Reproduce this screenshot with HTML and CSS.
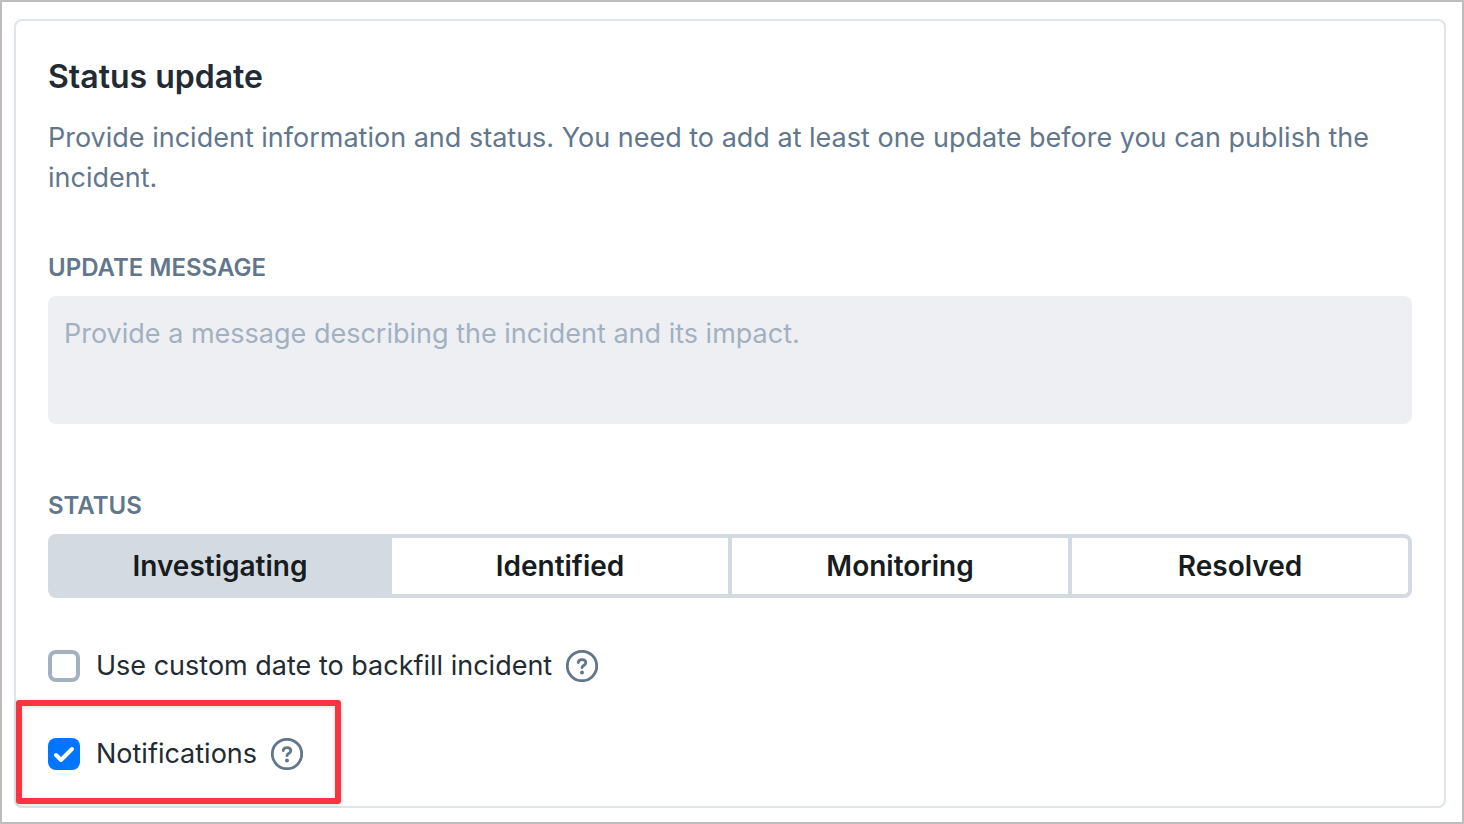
FILE: index.html
```html
<!DOCTYPE html>
<html lang="en">
<head>
<meta charset="utf-8">
<title>Status update</title>
<link rel="stylesheet" href="styles.css">
</head>
<body>
<main class="frame">
  <form class="card">
    <h1 class="title">Status update</h1>
    <p class="intro">Provide incident information and status. You need to add at least one update before you can publish the incident.</p>
    <label class="caption" for="message">UPDATE MESSAGE</label>
    <textarea class="message" id="message" placeholder="Provide a message describing the incident and its impact."></textarea>
    <h2 class="caption" id="status-caption">STATUS</h2>
    <div class="segments" role="group" aria-labelledby="status-caption">
      <button class="segment selected" type="button" aria-pressed="true">Investigating</button>
      <button class="segment" type="button" aria-pressed="false">Identified</button>
      <button class="segment" type="button" aria-pressed="false">Monitoring</button>
      <button class="segment" type="button" aria-pressed="false">Resolved</button>
    </div>
    <div class="option">
      <input class="check" type="checkbox" id="backfill">
      <label class="option-label" for="backfill">Use custom date to backfill incident</label>
      <button class="help" type="button" aria-label="Help with custom date">
        <svg class="help-icon" viewBox="0 0 32 32" aria-hidden="true"><circle cx="16" cy="16" r="14.7"/><path d="M12.200 12.500C12.500 10.500 14 9.600 16 9.600c2.200 0 3.800 1.200 3.800 3.100 0 2.800-3.800 2.800-3.800 5"/><circle class="dot" cx="16" cy="22.400" r="2"/></svg>
      </button>
    </div>
    <div class="option highlighted">
      <input class="check" type="checkbox" id="notifications" checked>
      <label class="option-label" for="notifications">Notifications</label>
      <button class="help" type="button" aria-label="Help with notifications">
        <svg class="help-icon" viewBox="0 0 32 32" aria-hidden="true"><circle cx="16" cy="16" r="14.7"/><path d="M12.200 12.500C12.500 10.500 14 9.600 16 9.600c2.200 0 3.800 1.200 3.800 3.100 0 2.800-3.800 2.800-3.800 5"/><circle class="dot" cx="16" cy="22.400" r="2"/></svg>
      </button>
    </div>
  </form>
</main>
</body>
</html>
```
FILE: styles.css
```css
* { box-sizing: border-box; }
body { margin: 0; background: #fff; font-family: Inter, "Liberation Sans", sans-serif; color: #222b33; }
.frame { min-height: 100vh; padding: 17px 16px 14px 12px; border: 2px solid #bdbdbd; }
.card { padding: 36px 32px 0; border: 2px solid #e0e5eb; border-radius: 8px; }
.title { margin: 0 0 21px; font-size: 32px; line-height: 40px; font-weight: 600; }
.intro { margin: 0 0 54px; font-size: 27px; line-height: 40px; color: #62778c; }
.caption { display: block; margin: 0 0 12px; font-size: 24px; line-height: 32px; font-weight: 600; color: #62778c; }
.message { display: block; width: 100%; height: 128px; margin: 0 0 66px; padding: 18px 16px; border: 0; border-radius: 8px; background: #eeeff3; font: inherit; font-size: 27px; line-height: 40px; resize: none; }
.message::placeholder { color: #a1b1c2; opacity: 1; }
.segments { display: flex; margin-bottom: 48px; border: 4px solid #d4dae2; border-radius: 8px; background: #d4dae2; gap: 4px; }
.segment { flex: 1; padding: 8px; border: 0; background: #fff; color: #161c20; font: inherit; font-size: 28px; line-height: 40px; font-weight: 600; }
.segment:last-child { border-radius: 0 4px 4px 0; }
.selected { background: #d4dae2; }
.option { display: flex; align-items: center; height: 40px; margin-bottom: 48px; }
.check { appearance: none; flex: none; width: 32px; height: 32px; margin: 0 16px 0 0; border: 4px solid #a1b1c2; border-radius: 8px; }
.check:checked { border: 0; background: #0075ff url("data:image/svg+xml,%3Csvg xmlns='http://www.w3.org/2000/svg' viewBox='0 0 32 32'%3E%3Cpath d='M8 17l5 5 11-11' fill='none' stroke='white' stroke-width='4' stroke-linecap='round' stroke-linejoin='round'/%3E%3C/svg%3E"); }
.option-label { font-size: 27px; line-height: 40px; }
.help { display: flex; margin-left: 14px; padding: 0; border: 0; background: none; color: #62778c; }
.help-icon { width: 32px; height: 32px; fill: none; stroke: currentColor; stroke-width: 2.800; stroke-linecap: round; }
.dot { fill: currentColor; stroke: none; }
.highlighted { position: relative; width: fit-content; margin-bottom: 32px; }
.highlighted::after { content: ""; position: absolute; box-sizing: border-box; inset: -34px -38px -30px -32px; border: 6px solid #fb3441; border-radius: 3px; box-shadow: 0 1px 4px #00000022, inset 0 1px 4px #00000022; pointer-events: none; }
```
